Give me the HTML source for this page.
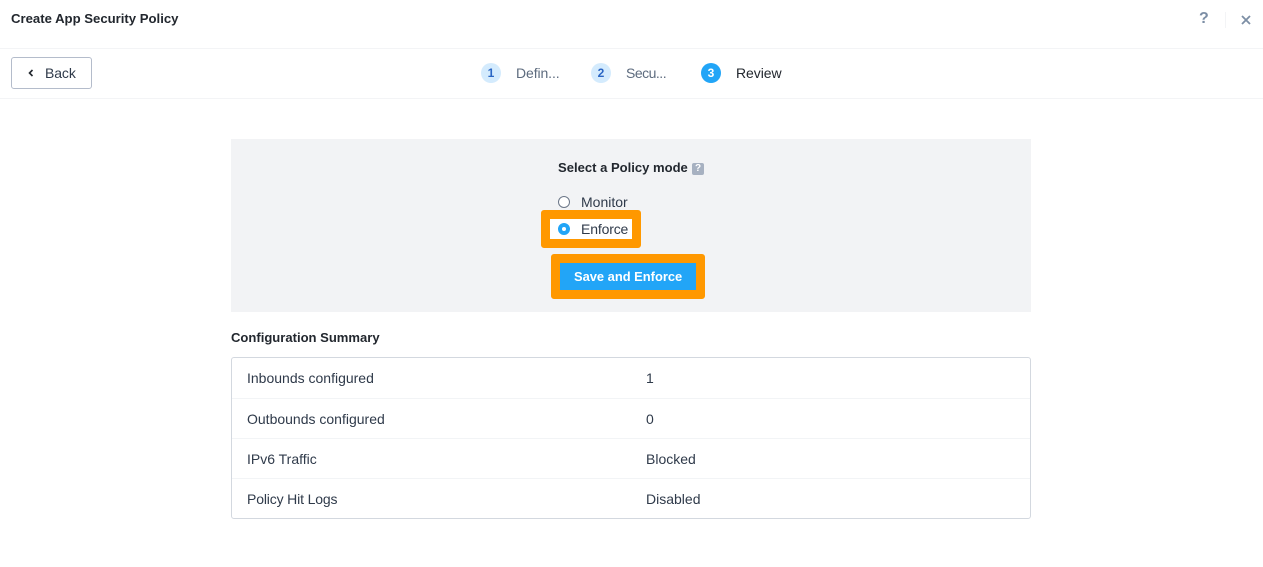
<!DOCTYPE html>
<html><head><meta charset="utf-8"><style>
html,body{margin:0;padding:0;width:1263px;height:567px;overflow:hidden;background:#fff}
body{position:relative;font-family:"Liberation Sans",sans-serif;font-size:14px;color:#22272e}
.a{position:absolute;white-space:nowrap;line-height:18px}
.b{position:absolute}
.c{position:absolute;width:20px;height:20px;border-radius:50%;background:#d4ebfd;color:#2b66c4;font-size:12px;font-weight:bold;text-align:center;line-height:20px;top:63px}
.g{color:#5d6b7e}
.d{color:#2f3a4a}
.l{position:absolute;left:232px;width:798px;height:1px;background:#f2f4f6}
</style></head><body>
<div class="a" style="left:11px;top:10px;font-size:13.15px;font-weight:bold">Create App Security Policy</div>
<div class="a" style="left:1199px;top:10px;font-size:16px;font-weight:bold;color:#7c8ea5">?</div>
<div class="b" style="left:1225px;top:12px;width:1px;height:16px;background:#f3f4f6"></div>
<svg class="b" style="left:1241px;top:15px" width="10" height="10" viewBox="0 0 10 10"><path d="M1 1L9 9M9 1L1 9" stroke="#7c8ea5" stroke-width="1.8" fill="none"/></svg>
<div class="b" style="left:0;top:48px;width:1263px;height:1px;background:#f3f4f6"></div>
<div class="b" style="left:0;top:98px;width:1263px;height:1px;background:#f3f4f6"></div>
<div class="b" style="left:11px;top:57px;width:79px;height:30px;border:1px solid #b4bccb;border-radius:3px"></div>
<svg class="b" style="left:28px;top:69px" width="6" height="8" viewBox="0 0 6 8"><path d="M4.5 1L1.5 4L4.5 7" stroke="#22272e" stroke-width="1.6" fill="none"/></svg>
<div class="a d" style="left:45px;top:64px;letter-spacing:-.1px">Back</div>
<div class="c" style="left:481px">1</div>
<div class="a g" style="left:516px;top:64px;letter-spacing:-.1px">Defin...</div>
<div class="c" style="left:591px">2</div>
<div class="a g" style="left:626px;top:64px;letter-spacing:-.5px">Secu...</div>
<div class="c" style="left:701px;background:#22a5f7;color:#fff">3</div>
<div class="a" style="left:736px;top:64px;letter-spacing:-.05px">Review</div>
<div class="b" style="left:231px;top:139px;width:800px;height:173px;background:#f2f3f5"></div>
<div class="a" style="left:558px;top:159px;font-size:13.05px;font-weight:bold">Select a Policy mode</div>
<div class="b" style="left:692px;top:163px;width:12px;height:12px;border-radius:2px;background:#a7b1c1;color:#fff;font-size:10px;font-weight:bold;text-align:center;line-height:12px">?</div>
<div class="b" style="left:558px;top:196px;width:10px;height:10px;border:1px solid #6c7788;border-radius:50%;background:#fff"></div>
<div class="a d" style="left:581px;top:193px">Monitor</div>
<div class="b" style="left:541px;top:210px;width:82px;height:20px;border:9px solid #ff9800;border-radius:3px;background:#fff"></div>
<div class="b" style="left:558px;top:223px;width:4px;height:4px;border:4px solid #22a5f7;border-radius:50%;background:#fff"></div>
<div class="a d" style="left:581px;top:220px;letter-spacing:-.15px">Enforce</div>
<div class="b" style="left:551px;top:254px;width:136px;height:27px;border:9px solid #ff9800;border-radius:3px;background:#22a5f7"></div>
<div class="a" style="left:574px;top:268px;font-weight:bold;color:#fff;font-size:12.9px">Save and Enforce</div>
<div class="a" style="left:231px;top:329px;font-size:13.05px;font-weight:bold">Configuration Summary</div>
<div class="b" style="left:231px;top:357px;width:798px;height:160px;border:1px solid #d3d8df;border-radius:3px"></div>
<div class="l" style="top:398px"></div><div class="l" style="top:438px"></div><div class="l" style="top:478px"></div>
<div class="a d" style="left:247px;top:369px">Inbounds configured</div><div class="a d" style="left:646px;top:369px">1</div>
<div class="a d" style="left:247px;top:410px">Outbounds configured</div><div class="a d" style="left:646px;top:410px">0</div>
<div class="a d" style="left:247px;top:450px">IPv6 Traffic</div><div class="a d" style="left:646px;top:450px">Blocked</div>
<div class="a d" style="left:247px;top:490px;letter-spacing:-.15px">Policy Hit Logs</div><div class="a d" style="left:646px;top:490px">Disabled</div>
</body></html>
